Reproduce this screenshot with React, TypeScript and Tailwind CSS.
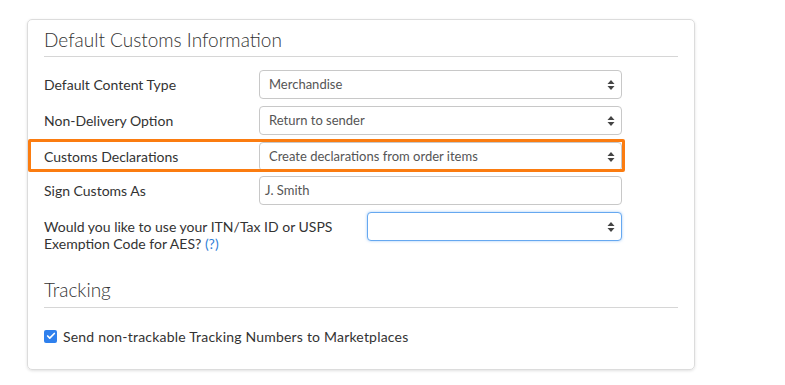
import { Check } from "lucide-react";

const font = { fontFamily: "Lato, 'Open Sans', sans-serif" };

function Arrows() {
  return (
    <svg width="8" height="12" viewBox="0 0 8 12" className="absolute right-[6px] top-1/2 -translate-y-1/2">
      <path d="M4 1 L7.5 5 L0.5 5 Z" fill="#444" />
      <path d="M4 11 L7.5 7 L0.5 7 Z" fill="#444" />
    </svg>
  );
}

function Select({ value, width, focused }: { value: string; width: string; focused?: boolean }) {
  return (
    <div
      className={`relative h-[29px] ${width} rounded-[4px] border bg-white flex items-center pl-[9px] text-[13px] text-[#555] ${
        focused
          ? "border-[#66a8f0] shadow-[0_0_3px_rgba(102,168,240,0.6)]"
          : "border-[#c8c8c8]"
      }`}
    >
      {value}
      <Arrows />
    </div>
  );
}

export default function App() {
  return (
    <div className="w-[785px] h-[385px] bg-white overflow-hidden pt-[19px] pl-[27px]" style={font}>
      <div className="w-[668px] h-[351px] rounded-[5px] border border-[#dcdcdc] shadow-[0_1px_3px_rgba(0,0,0,0.12)] px-[16px]">

        {/* Customs */}
        <div className="pt-[7px] pb-[3px] border-b border-[#d6d6d6]">
          <h2 className="text-[19px] leading-[26px] font-light text-[#333]">Default Customs Information</h2>
        </div>

        <div className="w-[578px]">
          <div className="mt-[13px] flex items-center h-[29px]">
            <label className="w-[215px] text-[14px] text-[#333]">Default Content Type</label>
            <Select value="Merchandise" width="w-[363px]" />
          </div>

          <div className="mt-[7px] flex items-center h-[29px]">
            <label className="w-[215px] text-[14px] text-[#333]">Non-Delivery Option</label>
            <Select value="Return to sender" width="w-[363px]" />
          </div>

          <div className="relative mt-[7px] flex items-center h-[29px]">
            <label className="w-[215px] text-[14px] text-[#333]">Customs Declarations</label>
            <Select value="Create declarations from order items" width="w-[363px]" />
            <span className="pointer-events-none absolute -left-[16px] -right-[3px] -top-[3px] -bottom-[1px] border-[3px] border-[#fb7c10] rounded-[2px]" />
          </div>

          <div className="mt-[5px] flex items-center h-[29px]">
            <label className="w-[215px] text-[14px] text-[#333]">Sign Customs As</label>
            <div className="h-[29px] w-[363px] rounded-[4px] border border-[#c8c8c8] flex items-center pl-[5px] text-[13px] text-[#555]">
              J. Smith
            </div>
          </div>

          <div className="mt-[7px] flex items-start h-[41px]">
            <div className="w-[323px] mt-[6px] text-[14px] leading-[17px] text-[#333]">
              <div>Would you like to use your ITN/Tax ID or USPS</div>
              <div>
                Exemption Code for AES? <span className="text-[#2f7fd8]">(?)</span>
              </div>
            </div>
            <Select value="" width="w-[255px]" focused />
          </div>
        </div>

        {/* Tracking */}
        <div className="mt-[24px] pb-[4px] border-b border-[#d6d6d6]">
          <h2 className="text-[19px] leading-[26px] font-light text-[#333]">Tracking</h2>
        </div>

        <div className="mt-[18px] flex items-center h-[20px] gap-[6px]">
          <span className="w-[13px] h-[13px] rounded-[2px] bg-[#2f80ed] flex items-center justify-center">
            <Check className="w-[10px] h-[10px] text-white" strokeWidth={4} />
          </span>
          <span className="text-[14px] tracking-[0.2px] text-[#333]">Send non-trackable Tracking Numbers to Marketplaces</span>
        </div>
      </div>
    </div>
  );
}
